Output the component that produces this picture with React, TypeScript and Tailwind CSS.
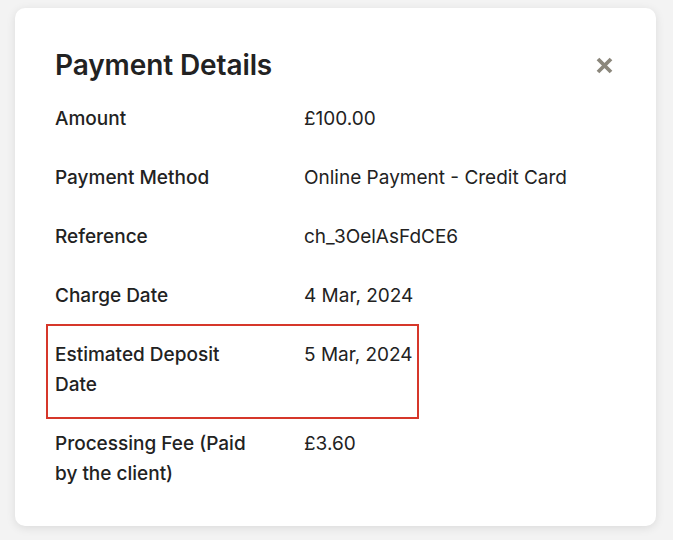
import React from "react";

type Row = { label: string; value: string; flagged?: boolean };

const rows: Row[] = [
  { label: "Amount", value: "£100.00" },
  { label: "Payment Method", value: "Online Payment - Credit Card" },
  { label: "Reference", value: "ch_3OelAsFdCE6" },
  { label: "Charge Date", value: "4 Mar, 2024" },
  { label: "Estimated Deposit Date", value: "5 Mar, 2024", flagged: true },
  { label: "Processing Fee (Paid by the client)", value: "£3.60" },
];

function CloseIcon() {
  return (
    <svg width="19" height="19" viewBox="0 0 19 19" aria-hidden="true">
      <path
        d="M3 3 L16 16 M16 3 L3 16"
        stroke="#8b877c"
        strokeWidth="3.8"
        strokeLinecap="butt"
      />
    </svg>
  );
}

export default function App() {
  return (
    <div
      className="h-[540px] w-[673px] bg-[#f3f3f3] pt-[8px] pl-[15px]"
      style={{ fontFamily: "Inter, 'Noto Sans', sans-serif" }}
    >
      <div className="h-[518px] w-[641px] rounded-[10px] bg-white pl-[40px] pr-[42px] pt-[41px] shadow-[0_2px_10px_rgba(0,0,0,0.10)]">
        <div className="flex items-center justify-between">
          <h2 className="text-[28px] font-semibold leading-[32px] tracking-[-0.1px] text-[#222]">
            Payment Details
          </h2>
          <button className="flex h-[32px] items-center justify-center">
            <CloseIcon />
          </button>
        </div>
        <div className="mt-[23px] flex flex-col gap-[29px]">
          {rows.map((r) => (
            <div key={r.label} className="relative flex text-[19px] leading-[30px] text-[#222]">
              {r.flagged && (
                <div className="pointer-events-none absolute left-[-9px] top-[-16px] bottom-[-19px] w-[373px] border-2 border-[#d6372a]" />
              )}
              <div className="w-[249px] pr-[52px] font-medium">{r.label}</div>
              <div className="font-normal">{r.value}</div>
            </div>
          ))}
        </div>
      </div>
    </div>
  );
}
